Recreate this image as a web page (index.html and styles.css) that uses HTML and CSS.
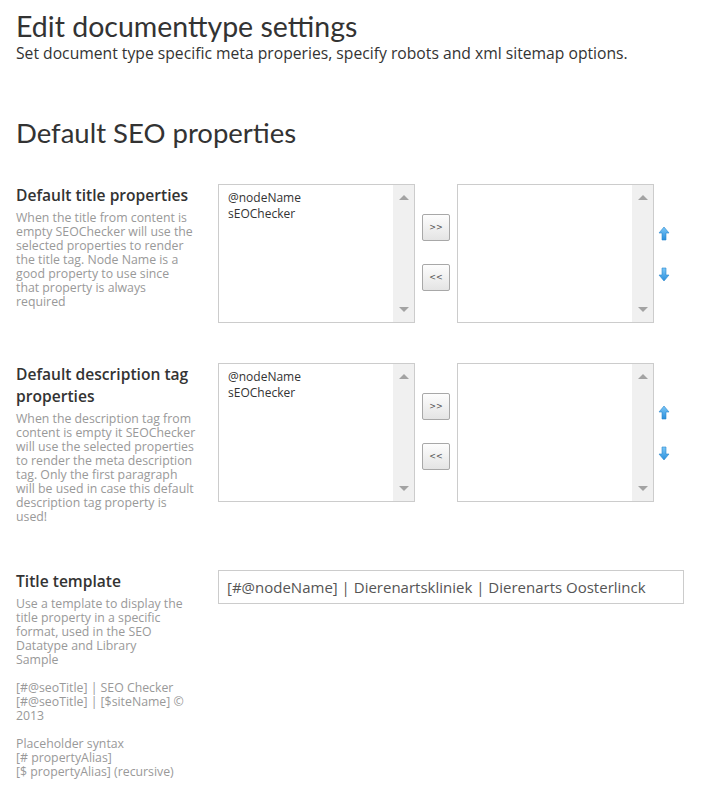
FILE: index.html
```html
<!DOCTYPE html>
<html>
<head>
  <meta charset="utf-8">
  <link rel="stylesheet" href="styles.css">
</head>
<body>
<div class="page">
  <h1 class="title">Edit documenttype settings</h1>
  <p class="subtitle">Set document type specific meta properies, specify robots and xml sitemap options.</p>

  <h2 class="section">Default SEO properties</h2>

  <div class="prop">
    <div class="prop-label">
      <h3>Default title properties</h3>
      <p class="help narrow">When the title from content is empty SEOChecker will use the selected properties to render the title tag. Node Name is a good property to use since that property is always required</p>
    </div>
    <div class="picker">
      <div class="listbox">
        <div class="items">
          <div>@nodeName</div>
          <div>sEOChecker</div>
        </div>
        <div class="scroll"><span class="up"></span><span class="down"></span></div>
      </div>
      <div class="movers">
        <button class="mv">&gt;&gt;</button>
        <button class="mv">&lt;&lt;</button>
      </div>
      <div class="listbox">
        <div class="items"></div>
        <div class="scroll"><span class="up"></span><span class="down"></span></div>
      </div>
      <div class="order">
        <svg width="12" height="15" viewBox="0 0 12 15"><defs><linearGradient id="ga" x1="0" y1="0" x2="0" y2="1"><stop offset="0" stop-color="#7cc8f8"/><stop offset="1" stop-color="#2b8fdc"/></linearGradient></defs><path d="M6 1 L11 7 L8 7 L8 14 L4 14 L4 7 L1 7 Z" fill="url(#ga)" stroke="#2a86cc" stroke-width="0.6"/></svg>
        <svg width="12" height="15" viewBox="0 0 12 15"><defs><linearGradient id="gb" x1="0" y1="0" x2="0" y2="1"><stop offset="0" stop-color="#7cc8f8"/><stop offset="1" stop-color="#2b8fdc"/></linearGradient></defs><path d="M4 1 L8 1 L8 8 L11 8 L6 14 L1 8 L4 8 Z" fill="url(#gb)" stroke="#2a86cc" stroke-width="0.6"/></svg>
      </div>
    </div>
  </div>

  <div class="prop">
    <div class="prop-label">
      <h3>Default description tag properties</h3>
      <p class="help">When the description tag from content is empty it SEOChecker will use the selected properties to render the meta description tag. Only the first paragraph will be used in case this default description tag property is used!</p>
    </div>
    <div class="picker">
      <div class="listbox">
        <div class="items">
          <div>@nodeName</div>
          <div>sEOChecker</div>
        </div>
        <div class="scroll"><span class="up"></span><span class="down"></span></div>
      </div>
      <div class="movers">
        <button class="mv">&gt;&gt;</button>
        <button class="mv">&lt;&lt;</button>
      </div>
      <div class="listbox">
        <div class="items"></div>
        <div class="scroll"><span class="up"></span><span class="down"></span></div>
      </div>
      <div class="order">
        <svg width="12" height="15" viewBox="0 0 12 15"><path d="M6 1 L11 7 L8 7 L8 14 L4 14 L4 7 L1 7 Z" fill="url(#ga)" stroke="#2a86cc" stroke-width="0.6"/></svg>
        <svg width="12" height="15" viewBox="0 0 12 15"><path d="M4 1 L8 1 L8 8 L11 8 L6 14 L1 8 L4 8 Z" fill="url(#gb)" stroke="#2a86cc" stroke-width="0.6"/></svg>
      </div>
    </div>
  </div>

  <div class="prop">
    <div class="prop-label">
      <h3>Title template</h3>
      <p class="help">Use a template to display the title property in a specific format, used in the SEO Datatype and Library<br>Sample</p>
      <p class="help">[#@seoTitle] | SEO Checker<br>[#@seoTitle] | [$siteName] &copy; 2013</p>
      <p class="help">Placeholder syntax<br>[# propertyAlias]<br>[$ propertyAlias] (recursive)</p>
    </div>
    <div class="field">
      <input class="template" value="[#@nodeName] | Dierenartskliniek | Dierenarts Oosterlinck">
    </div>
  </div>
</div>
</body>
</html>
```

FILE: styles.css
```css
body{
  margin:0;
  background:#fff;
  color:#333;
  font-family:"Open Sans", sans-serif;
}
.page{
  padding:8px 16px 0 16px;
}
h1.title{
  font-family:Lato, "Open Sans", sans-serif;
  font-weight:400;
  font-size:28.5px;
  line-height:36px;
  margin:0;
  color:#333;
}
p.subtitle{
  font-size:15.7px;
  line-height:18px;
  margin:0;
  color:#333;
}
h2.section{
  font-family:Lato, "Open Sans", sans-serif;
  font-weight:400;
  font-size:27.5px;
  line-height:36px;
  margin:53px 0 33px 0;
  color:#333;
}
.prop{
  display:grid;
  grid-template-columns:202px auto;
  margin-bottom:40px;
}
.prop:last-child{
  margin-bottom:0;
}
.prop-label h3{
  font-size:15.6px;
  font-weight:600;
  line-height:22px;
  margin:0 0 5px 0;
  color:#333;
}
p.help{
  width:181px;
  font-size:12.3px;
  line-height:14px;
  color:#999;
  margin:0 0 14px 0;
}
p.help.narrow{
  width:177px;
}
p.help:last-child{
  margin-bottom:6px;
}
.picker{
  display:flex;
  align-items:flex-start;
}
.listbox{
  width:195px;
  height:137px;
  border:1px solid #ccc;
  display:flex;
  background:#fff;
}
.listbox .items{
  flex:1;
  padding:5px 9px;
  font-size:12px;
  line-height:16px;
  color:#333;
}
.scroll{
  width:21px;
  background:#f0f0f0;
  display:flex;
  flex-direction:column;
  justify-content:space-between;
  align-items:center;
  padding:10px 0;
}
.scroll span{
  width:0;
  height:0;
  border-left:5px solid transparent;
  border-right:5px solid transparent;
}
.scroll .up{
  border-bottom:5px solid #a3a3a3;
}
.scroll .down{
  border-top:5px solid #a3a3a3;
}
.movers{
  width:42px;
  display:flex;
  flex-direction:column;
  align-items:center;
  gap:23px;
  padding-top:30px;
}
button.mv{
  width:28px;
  height:27px;
  border:1px solid #a8a8a8;
  border-radius:2px;
  background:linear-gradient(#fdfdfd,#e4e4e4);
  font-family:"DejaVu Sans", sans-serif;
  font-size:8px;
  color:#555;
  padding:0;
}
.order{
  display:flex;
  flex-direction:column;
  gap:26px;
  padding:42px 0 0 4px;
}
input.template{
  width:466px;
  height:34px;
  box-sizing:border-box;
  border:1px solid #ccc;
  padding:0 8px;
  font-family:"Open Sans", sans-serif;
  font-size:15px;
  color:#555;
}
```
